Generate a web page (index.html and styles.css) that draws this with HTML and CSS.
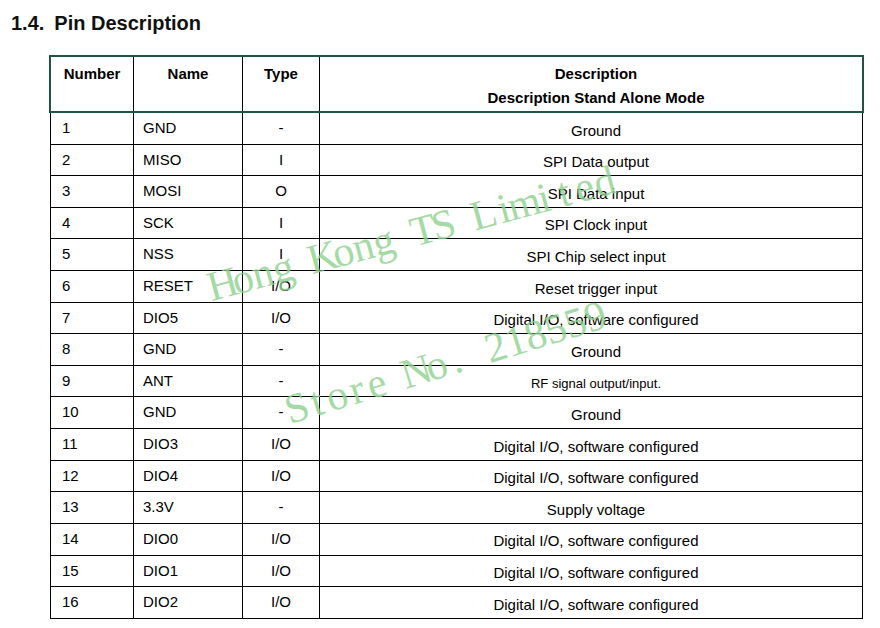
FILE: index.html
```html
<!DOCTYPE html>
<html lang="en">
<head>
<meta charset="utf-8">
<title>Pin Description</title>
<link rel="stylesheet" href="styles.css">
</head>
<body>
<div class="page">
  <h1 class="title"><span class="title-num">1.4.</span><span>Pin Description</span></h1>
  <div class="pins">
    <div class="row head">
      <div class="cell c-num">Number</div>
      <div class="cell c-name">Name</div>
      <div class="cell c-type">Type</div>
      <div class="cell c-desc">Description<br>Description Stand Alone Mode</div>
    </div>
    <div class="row item"><div class="cell c-num">1</div><div class="cell c-name">GND</div><div class="cell c-type">-</div><div class="cell c-desc">Ground</div></div>
    <div class="row item"><div class="cell c-num">2</div><div class="cell c-name">MISO</div><div class="cell c-type">I</div><div class="cell c-desc">SPI Data output</div></div>
    <div class="row item"><div class="cell c-num">3</div><div class="cell c-name">MOSI</div><div class="cell c-type">O</div><div class="cell c-desc">SPI Data input</div></div>
    <div class="row item"><div class="cell c-num">4</div><div class="cell c-name">SCK</div><div class="cell c-type">I</div><div class="cell c-desc">SPI Clock input</div></div>
    <div class="row item"><div class="cell c-num">5</div><div class="cell c-name">NSS</div><div class="cell c-type">I</div><div class="cell c-desc">SPI Chip select input</div></div>
    <div class="row item"><div class="cell c-num">6</div><div class="cell c-name">RESET</div><div class="cell c-type">I/O</div><div class="cell c-desc">Reset trigger input</div></div>
    <div class="row item"><div class="cell c-num">7</div><div class="cell c-name">DIO5</div><div class="cell c-type">I/O</div><div class="cell c-desc">Digital I/O, software configured</div></div>
    <div class="row item"><div class="cell c-num">8</div><div class="cell c-name">GND</div><div class="cell c-type">-</div><div class="cell c-desc">Ground</div></div>
    <div class="row item"><div class="cell c-num">9</div><div class="cell c-name">ANT</div><div class="cell c-type">-</div><div class="cell c-desc small">RF signal output/input.</div></div>
    <div class="row item"><div class="cell c-num">10</div><div class="cell c-name">GND</div><div class="cell c-type">-</div><div class="cell c-desc">Ground</div></div>
    <div class="row item"><div class="cell c-num">11</div><div class="cell c-name">DIO3</div><div class="cell c-type">I/O</div><div class="cell c-desc">Digital I/O, software configured</div></div>
    <div class="row item"><div class="cell c-num">12</div><div class="cell c-name">DIO4</div><div class="cell c-type">I/O</div><div class="cell c-desc">Digital I/O, software configured</div></div>
    <div class="row item"><div class="cell c-num">13</div><div class="cell c-name">3.3V</div><div class="cell c-type">-</div><div class="cell c-desc">Supply voltage</div></div>
    <div class="row item"><div class="cell c-num">14</div><div class="cell c-name">DIO0</div><div class="cell c-type">I/O</div><div class="cell c-desc">Digital I/O, software configured</div></div>
    <div class="row item"><div class="cell c-num">15</div><div class="cell c-name">DIO1</div><div class="cell c-type">I/O</div><div class="cell c-desc">Digital I/O, software configured</div></div>
    <div class="row item"><div class="cell c-num">16</div><div class="cell c-name">DIO2</div><div class="cell c-type">I/O</div><div class="cell c-desc">Digital I/O, software configured</div></div>
  </div>
  <svg class="watermark" width="880" height="628" viewBox="0 0 880 628" aria-hidden="true">
    <text transform="rotate(-15 216 300)" y="300" x="226.4 247.2 268 288.8 309.6 330.4 351.2 372 392.8 413.6 434.4 455.2 476 496.8 517.6 538.4 559.2 580 600.8 621.6">Hong Kong TS Limited</text>
    <text transform="rotate(-17 291 424)" y="424" x="301.4 322.2 343 363.8 384.6 405.4 426.2 447 467.8 488.6 509.4 530.2 551 571.8 592.6 613.4">Store No. 218559</text>
  </svg>
</div>
</body>
</html>
```

FILE: styles.css
```css
body {
  margin: 0;
  background: #fff;
  color: #000;
  font-family: "Liberation Sans", Arial, sans-serif;
}

.page {
  position: relative;
  width: 880px;
  height: 628px;
  overflow: hidden;
}

.title {
  margin: 0;
  padding: 11px 0 0 11px;
  font-size: 20px;
  line-height: 24px;
  font-weight: bold;
  color: #111;
}

.title-num {
  margin-right: 10px;
}

.pins {
  margin: 20px 0 0 49px;
  width: 815px;
}

.row {
  display: grid;
  grid-template-columns: 83px 109px 77px 542px;
}

.cell {
  box-sizing: border-box;
  border-right: 1px solid #000;
}

.cell:last-child {
  border-right: 0;
}

.head {
  box-sizing: border-box;
  height: 58px;
  border: 2px solid #1f5346;
  font-size: 15px;
  font-weight: bold;
}

.head .cell {
  padding-top: 5px;
  line-height: 23.5px;
  text-align: center;
}

.head .c-desc {
  padding-left: 10px;
}

.item {
  box-sizing: border-box;
  width: 813px;
  height: 31.62px;
  margin-left: 1px;
  border-left: 1px solid #000;
  border-right: 1px solid #000;
  border-bottom: 1px solid #000;
  font-size: 15px;
  line-height: 17px;
}

.item .cell {
  padding-top: 6px;
}

.item .c-num {
  padding-left: 11px;
}

.item .c-name {
  padding-left: 9px;
}

.item .c-type {
  text-align: center;
}

.item .c-desc {
  padding-top: 8.5px;
  padding-left: 10px;
  text-align: center;
}

.item .c-desc.small {
  font-size: 13px;
  padding-top: 9px;
}

.watermark {
  position: absolute;
  left: 0;
  top: 0;
  pointer-events: none;
  font-family: "Liberation Serif", "Times New Roman", serif;
  font-size: 42px;
  text-anchor: middle;
  fill: #8fd28f;
  fill-opacity: 0.82;
}
```
